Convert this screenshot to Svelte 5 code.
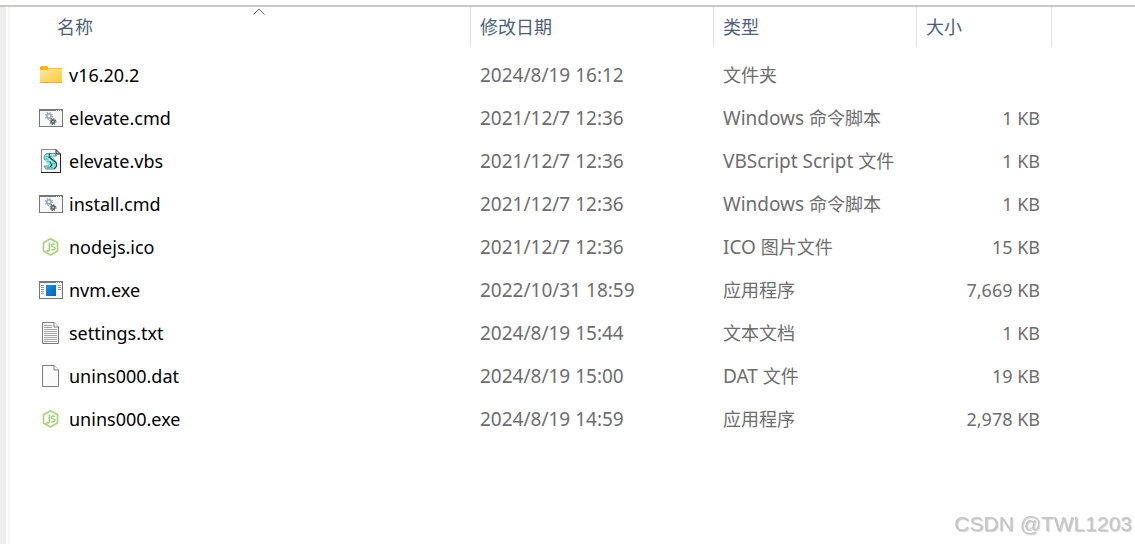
<script lang="ts">
  type Icon = 'folder' | 'cmd' | 'vbs' | 'node' | 'app' | 'text' | 'file';
  type Entry = { name: string; icon: Icon; modified: string; latin?: string; kind: string; size?: string };

  const entries: Entry[] = [
    { name: 'v16.20.2', icon: 'folder', modified: '2024/8/19 16:12', kind: '文件夹' },
    { name: 'elevate.cmd', icon: 'cmd', modified: '2021/12/7 12:36', latin: 'Windows ', kind: '命令脚本', size: '1 KB' },
    { name: 'elevate.vbs', icon: 'vbs', modified: '2021/12/7 12:36', latin: 'VBScript Script ', kind: '文件', size: '1 KB' },
    { name: 'install.cmd', icon: 'cmd', modified: '2021/12/7 12:36', latin: 'Windows ', kind: '命令脚本', size: '1 KB' },
    { name: 'nodejs.ico', icon: 'node', modified: '2021/12/7 12:36', latin: 'ICO ', kind: '图片文件', size: '15 KB' },
    { name: 'nvm.exe', icon: 'app', modified: '2022/10/31 18:59', kind: '应用程序', size: '7,669 KB' },
    { name: 'settings.txt', icon: 'text', modified: '2024/8/19 15:44', kind: '文本文档', size: '1 KB' },
    { name: 'unins000.dat', icon: 'file', modified: '2024/8/19 15:00', latin: 'DAT ', kind: '文件', size: '19 KB' },
    { name: 'unins000.exe', icon: 'node', modified: '2024/8/19 14:59', kind: '应用程序', size: '2,978 KB' },
  ];

  const columns = [
    { key: 'name', label: '名称' },
    { key: 'modified', label: '修改日期' },
    { key: 'kind', label: '类型' },
    { key: 'size', label: '大小' },
  ];

  let sortKey = $state('name');
</script>

{#snippet gear(cx: number, cy: number, r: number, color: string)}
  <circle {cx} {cy} {r} fill="none" stroke={color} stroke-width="1.8" />
  <circle {cx} {cy} r={r + 1.3} fill="none" stroke={color} stroke-width="1.3" stroke-dasharray="{(r + 1.3) * 0.393} {(r + 1.3) * 0.393}" />
{/snippet}

{#snippet glyph(icon: Icon)}
  <svg class="icon" viewBox="0 0 24 24" aria-hidden="true">
    {#if icon === 'folder'}
      <path d="M1 4.5Q1 3 2.5 3H8L9.5 5H23V19.5H1Z" fill="#f5b31c" />
      <path d="M1 7H8L9.5 5.700H23V18.5Q23 20 22 20H2Q1 20 1 18.5Z" fill="url(#folder-fill)" />
      <path d="M1 19.5H23" stroke="#eeb02b" />
    {:else if icon === 'cmd'}
      <rect x="0.5" y="3.5" width="23" height="17" fill="#f7f8f9" stroke="#777" />
      <path d="M0 4H24" stroke="#777" stroke-width="2" />
      <path d="M17 4.5H23" stroke="#fff" stroke-dasharray="1 1" />
      {@render gear(10, 10, 2.2, '#a3adb8')}
      {@render gear(14, 15.5, 1.6, '#5f6870')}
    {:else if icon === 'vbs'}
      <path d="M2.5 0.5H17L21.5 5V23.5H2.5Z" fill="#fff" />
      <path d="M2.5 23V0.5H17" fill="none" stroke="#8a8a8a" />
      <path d="M2 23.5H22M21.5 5V23" stroke="#222" />
      <path d="M17 0.5V5H21.5Z" fill="#ccc" stroke="#222" />
      <path d="M8 4.5H16L17.5 7H13L18 13Q18.5 17 15 20H7L5 17H10L5.5 11Q4 6 8 4.5Z" fill="#8de9e4" />
      <path d="M8 4.5H16L17.5 7H11M8 4.5Q4 6 5.5 11M15 20H7L5 17H10" fill="none" stroke="#5a8c8c" />
      <path d="M10 5Q12 7 10 8L17 13.5Q19 17 15 20M11 13L13 16L11 18" fill="none" stroke="#2b4548" stroke-width="1.2" />
      <path d="M7 7.5H9M6 10H9M8 12.5H12M12 14.5H16M8 18.5H14" stroke="#28c9c3" />
      <path d="M10 10.5L14 13.5M11 6H15" stroke="#eaffff" />
    {:else if icon === 'node'}
      <path d="M11.5 3.8L18.5 7.8V16L11.5 20L4.5 16V7.8Z" fill="none" stroke="#a5d47a" stroke-width="1.7" stroke-linejoin="round" />
      <path d="M10.3 7.5V14.5Q10.3 17 7.3 15.5M16 9.5Q12.4 8.3 12.4 10.4Q12.4 11.6 14.2 11.9Q16.3 12.2 16 13.7Q15.4 15.3 12.200 14.5" fill="none" stroke="#9dcf70" stroke-width="1.4" />
    {:else if icon === 'app'}
      <rect x="0.5" y="3.5" width="23" height="17" fill="#f8f8f8" stroke="#777" />
      <path d="M0 4H24" stroke="#777" stroke-width="2" />
      <path d="M17 4.5H23" stroke="#fff" stroke-dasharray="1 1" />
      <path d="M2 7.5H5M2 9.5H5M2 11.5H5M2 13.5H5M2 15.5H5M19 7.5H22M19 9.5H22M19 11.5H22" stroke="#999" />
      <rect x="7" y="7" width="10" height="11" fill="url(#app-fill)" />
    {:else}
      <path d="M3.5 1.5H15L19.5 6V22.5H3.5Z" fill="#fafafa" stroke="#7c7c7c" />
      <path d="M15 1.5V6H19.5" fill="#fff" stroke="#7c7c7c" />
      {#if icon === 'text'}
        <path d="M5 4.5H13M5 6.5H13M5 8.5H18M5 10.5H18M5 12.5H18M5 14.5H18M5 16.5H18M5 18.5H18M5 20.5H18" stroke="#a3a3a3" />
      {/if}
    {/if}
  </svg>
{/snippet}

<!-- shared gradients -->
<svg class="defs" width="0" height="0" aria-hidden="true">
  <linearGradient id="folder-fill" x1="0" y1="0" x2="1" y2="1">
    <stop offset="0" stop-color="#ffe7a0" />
    <stop offset="1" stop-color="#ffca3a" />
  </linearGradient>
  <linearGradient id="app-fill" x1="0" y1="0" x2="1" y2="1">
    <stop offset="0" stop-color="#1a91dc" />
    <stop offset="1" stop-color="#0761b5" />
  </linearGradient>
</svg>

<main class="explorer">
  <div class="splitter"></div>
  <table>
    <colgroup>
      <col class="c-name" />
      <col class="c-modified" />
      <col class="c-kind" />
      <col class="c-size" />
      <col />
    </colgroup>
    <thead>
      <tr>
        {#each columns as col (col.key)}
          <th aria-sort={sortKey === col.key ? 'ascending' : 'none'}>
            <button onclick={() => (sortKey = col.key)}>{col.label}</button>
            {#if sortKey === col.key}
              <svg class="caret" viewBox="0 0 12 7" aria-hidden="true"><path d="M0.5 6.5L6 1L11.5 6.5" /></svg>
            {/if}
          </th>
        {/each}
        <td></td>
      </tr>
    </thead>
    <tbody>
      {#each entries as entry (entry.name)}
        <tr>
          <td class="name"><div class="file">{@render glyph(entry.icon)}<span>{entry.name}</span></div></td>
          <td>{entry.modified}</td>
          <td>{entry.latin ?? ''}<span class="han">{entry.kind}</span></td>
          <td class="size">{entry.size ?? ''}</td>
          <td></td>
        </tr>
      {/each}
    </tbody>
  </table>
  <div class="watermark">CSDN @TWL1203</div>
</main>

<style>
  :global(body) {
    margin: 0;
    background: #fff;
  }
  .defs { position: absolute; }
  .explorer {
    box-sizing: border-box;
    min-height: 100vh;
    padding-top: 5px;
    display: flex;
    font-family: 'Noto Sans', 'Noto Sans CJK SC', sans-serif;
    font-size: 19px;
    line-height: 24px;
    color: #6d6d6d;
  }
  .splitter {
    flex: none;
    box-sizing: border-box;
    width: 10px;
    border-top: 2px solid #c8c8c4;
    background: linear-gradient(90deg, #eee 6px, #fff 6px, #fff 8px, #f8f8f8 8px);
  }
  table {
    flex: 1;
    align-self: flex-start;
    table-layout: fixed;
    width: 100%;
    border-collapse: separate;
    border-spacing: 0;
    border-top: 2px solid #c8c8c8;
  }
  .c-name { width: 461px; }
  .c-modified { width: 243px; }
  .c-kind { width: 203px; }
  .c-size { width: 135px; }
  th {
    position: relative;
    box-sizing: border-box;
    height: 40px;
    padding: 0;
    border-right: 1px solid #e3e3e3;
    text-align: left;
  }
  button {
    width: 100%;
    height: 40px;
    padding: 0 9px 2px;
    border: none;
    background: none;
    font: 18px/24px 'Noto Sans CJK SC', sans-serif;
    text-align: left;
    color: #4c607a;
  }
  th:first-child button { padding-left: 47px; }
  .caret {
    position: absolute;
    top: 1px;
    left: calc(50% + 13px);
    width: 12px;
    height: 7px;
    fill: none;
    stroke: #666;
  }
  tbody::before {
    content: '';
    display: table-row;
    height: 6px;
  }
  tbody td {
    height: 43px;
    padding: 0 9px;
    white-space: nowrap;
  }
  tbody .name {
    padding-left: 29px;
    font-size: 18px;
    color: #000;
  }
  .file {
    display: flex;
    align-items: center;
    gap: 6px;
  }
  .icon {
    flex: none;
    width: 24px;
    height: 24px;
  }
  .han { font-size: 18px; }
  tbody .size {
    padding-right: 12px;
    font-size: 18px;
    text-align: right;
  }
  .watermark {
    position: fixed;
    right: 3px;
    bottom: 8px;
    font: 21px/24px 'Liberation Sans', sans-serif;
    color: #c6c6c6;
    text-shadow: 1px 1px 1px #ccc;
  }
</style>
